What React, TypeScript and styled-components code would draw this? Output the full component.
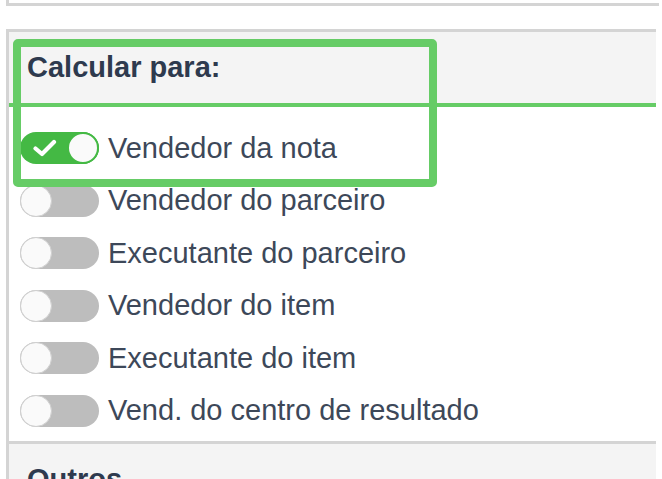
import styled, { createGlobalStyle } from "styled-components";

const GlobalStyle = createGlobalStyle`
  body {
    margin: 0;
    background: #ffffff;
    font-family: "Liberation Sans", Arial, sans-serif;
  }
`;

const Page = styled.div`
  position: relative;
  width: 662px;
  height: 479px;
  overflow: hidden;
  padding-left: 6px;
  box-sizing: border-box;
`;

const PrevPanel = styled.div`
  width: 650px;
  height: 3px;
  border-left: 3px solid #d4d4d4;
  border-bottom: 3px solid #d4d4d4;
  box-sizing: content-box;
  margin-bottom: 23px;
`;

const Panel = styled.section<{ $first?: boolean }>`
  width: 647px;
  border-left: 3px solid #d4d4d4;
  border-top: ${(p) => (p.$first ? "3px solid #d4d4d4" : "none")};
  background: #ffffff;
`;

const Header = styled.div<{ $accent?: boolean }>`
  height: 71px;
  display: flex;
  align-items: center;
  padding-left: 18px;
  background: #f4f4f4;
  border-bottom: ${(p) => (p.$accent ? "4px solid #66cc66" : "none")};
  font-size: 29px;
  font-weight: 700;
  color: #2e3a4e;
`;

const Body = styled.div`
  padding: 15px 0 4px 11px;
  border-bottom: 3px solid #d4d4d4;
`;

const Row = styled.label`
  height: 52.5px;
  display: flex;
  align-items: center;
  gap: 9px;
  font-size: 29px;
  color: #3d4859;
  white-space: nowrap;
`;

const Track = styled.span<{ $on: boolean }>`
  position: relative;
  width: 79px;
  height: 32px;
  border-radius: 16px;
  background: ${(p) => (p.$on ? "#44b944" : "#bdbdbd")};
  flex-shrink: 0;
`;

const Knob = styled.span<{ $on: boolean }>`
  position: absolute;
  top: 0;
  left: ${(p) => (p.$on ? "47px" : "0")};
  width: 32px;
  height: 32px;
  box-sizing: border-box;
  border-radius: 50%;
  background: #fafafa;
  border: ${(p) => (p.$on ? "2px solid #44b944" : "1.5px solid #cfcfcf")};
`;

const Check = styled.svg`
  position: absolute;
  left: 13px;
  top: 7px;
`;

const Highlight = styled.div`
  position: absolute;
  left: 13px;
  top: 39px;
  width: 424px;
  height: 148px;
  box-sizing: border-box;
  border: 8px solid #66cc66;
  border-radius: 5px;
  pointer-events: none;
`;

function Toggle({ on }: { on: boolean }) {
  return (
    <Track $on={on}>
      {on && (
        <Check width="24" height="18" viewBox="0 0 24 18">
          <polyline points="2.5,9.5 9,15 21,3" fill="none" stroke="#ffffff" strokeWidth="4.2" strokeLinecap="round" strokeLinejoin="round" />
        </Check>
      )}
      <Knob $on={on} />
    </Track>
  );
}

const options = [
  { label: "Vendedor da nota", on: true },
  { label: "Vendedor do parceiro", on: false },
  { label: "Executante do parceiro", on: false },
  { label: "Vendedor do item", on: false },
  { label: "Executante do item", on: false },
  { label: "Vend. do centro de resultado", on: false },
];

export default function App() {
  return (
    <>
      <GlobalStyle />
      <Page>
        <PrevPanel />
        <Panel $first>
          <Header $accent>Calcular para:</Header>
          <Body>
            {options.map((o) => (
              <Row key={o.label}>
                <Toggle on={o.on} />
                {o.label}
              </Row>
            ))}
          </Body>
        </Panel>
        <Panel>
          <Header>Outros</Header>
        </Panel>
        <Highlight />
      </Page>
    </>
  );
}
